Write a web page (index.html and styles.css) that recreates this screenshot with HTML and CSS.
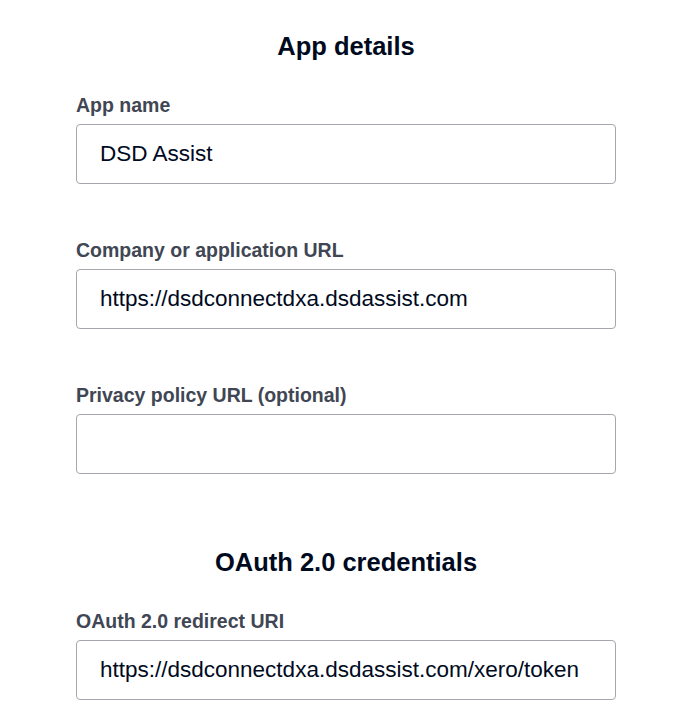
FILE: index.html
```html
<!DOCTYPE html>
<html>
    <head>
        <title>App details</title>
        <meta charset="UTF-8">
        <link rel="stylesheet" href="styles.css">
    </head>
    <body>
        <div class="page">
            <div class="section">
                <h2 class="section_title">App details</h2>
                <div class="field">
                    <label class="field_label" for="app_name">App name</label>
                    <input class="field_input" id="app_name" type="text" value="DSD Assist">
                </div>
                <div class="field">
                    <label class="field_label" for="company_url">Company or application URL</label>
                    <input class="field_input" id="company_url" type="text" value="https://dsdconnectdxa.dsdassist.com">
                </div>
                <div class="field">
                    <label class="field_label" for="privacy_url">Privacy policy URL (optional)</label>
                    <input class="field_input" id="privacy_url" type="text" value="">
                </div>
            </div>
            <div class="section">
                <h2 class="section_title">OAuth 2.0 credentials</h2>
                <div class="field">
                    <label class="field_label" for="redirect_uri">OAuth 2.0 redirect URI</label>
                    <input class="field_input" id="redirect_uri" type="text" value="https://dsdconnectdxa.dsdassist.com/xero/token">
                </div>
            </div>
        </div>
    </body>
</html>
```

FILE: styles.css
```css
body {
    margin: 0;
    background: #ffffff;
    font-family: "Liberation Sans", Arial, sans-serif;
}
.page {
    display: flex;
    flex-direction: column;
    gap: 74px;
    width: 540px;
    margin-left: 76px;
    padding-top: 32px;
}
.section {
    display: flex;
    flex-direction: column;
    gap: 56px;
}
.section_title {
    margin: 0 0 -21px 0;
    font-size: 25.5px;
    line-height: 28px;
    font-weight: bold;
    text-align: center;
    color: #000a1e;
}
.field {
    display: flex;
    flex-direction: column;
    gap: 8px;
}
.field_label {
    font-size: 19.5px;
    line-height: 21px;
    font-weight: bold;
    color: #404653;
}
.field_input {
    box-sizing: border-box;
    width: 100%;
    height: 60px;
    margin: 0;
    padding: 0 23px;
    border: 1px solid #a4a7ae;
    border-radius: 4px;
    font-family: "Liberation Sans", Arial, sans-serif;
    font-size: 22.5px;
    color: #000a1e;
    background: #ffffff;
    outline: none;
}
```
